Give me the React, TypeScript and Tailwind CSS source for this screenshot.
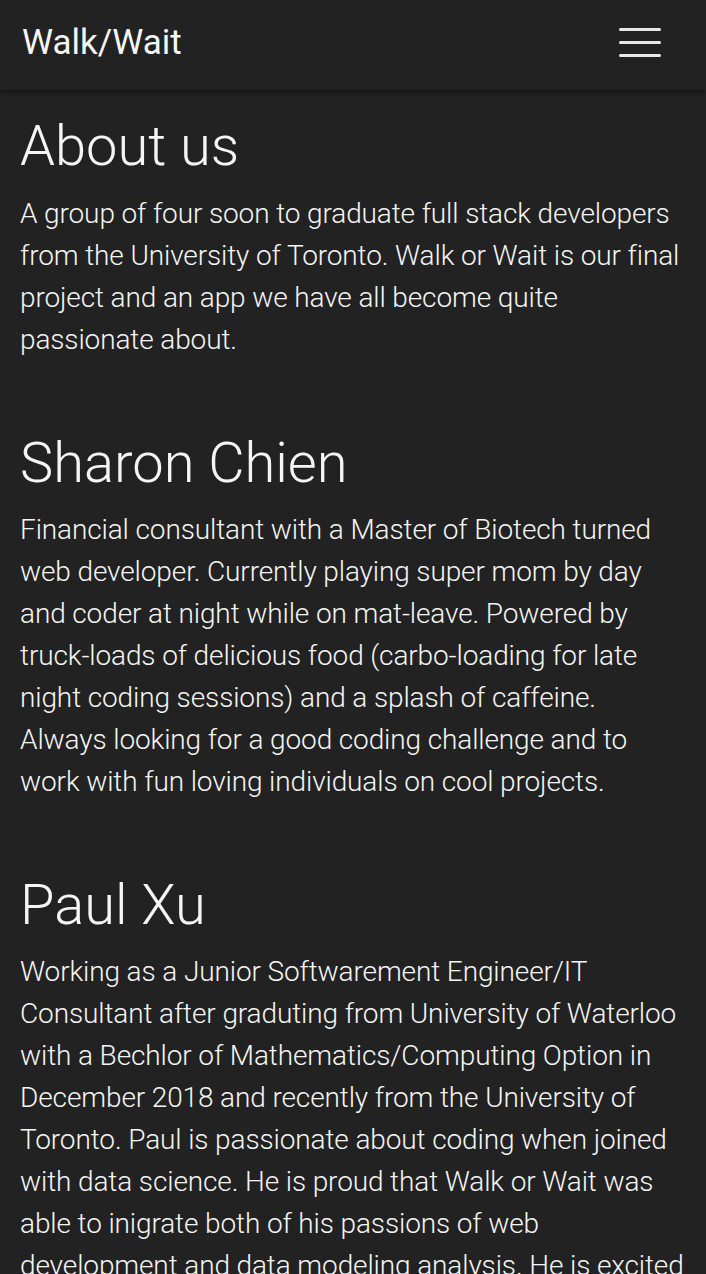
import { Fragment } from "react";

const members = [
  {
    name: "Sharon Chien",
    bio: "Financial consultant with a Master of Biotech turned web developer. Currently playing super mom by day and coder at night while on mat-leave. Powered by truck-loads of delicious food (carbo-loading for late night coding sessions) and a splash of caffeine. Always looking for a good coding challenge and to work with fun loving individuals on cool projects.",
  },
  {
    name: "Paul Xu",
    bio: "Working as a Junior Softwarement Engineer/IT Consultant after graduting from University of Waterloo with a Bechlor of Mathematics/Computing Option in December 2018 and recently from the University of Toronto. Paul is passionate about coding when joined with data science. He is proud that Walk or Wait was able to inigrate both of his passions of web development and data modeling analysis. He is excited to see what the future holds.",
  },
];

function App() {
  return (
    <Fragment>
      <div className="min-h-screen bg-[#222222] text-[#f5f5f5] font-['Roboto',sans-serif]">
        <nav className="relative z-10 h-[90px] pb-[3px] flex items-center justify-between pl-[22px] pr-[45px] bg-[#222222] shadow-[0_2px_6px_rgba(0,0,0,0.45)]">
          <span className="text-[35px] font-normal">Walk/Wait</span>
          <button className="flex flex-col gap-[10px] w-[42px] mb-[2px]">
            <span className="block h-[3px] w-full rounded-full bg-[#e8e8e8]" />
            <span className="block h-[3px] w-full rounded-full bg-[#e8e8e8]" />
            <span className="block h-[3px] w-full rounded-full bg-[#e8e8e8]" />
          </button>
        </nav>
        <main className="px-[20px] pt-[24px] pb-10">
          <section>
            <h1 className="text-[56px] leading-[64px] font-light">About us</h1>
            <p className="mt-[15px] text-[28px] leading-[42px] font-light tracking-[-0.12px]">
              A group of four soon to graduate full stack developers from the
              University of Toronto. Walk or Wait is our final project and an
              app we have all become quite passionate about.
            </p>
          </section>
          {members.map((m) => (
            <section key={m.name} className="mt-[70px]">
              <h2 className="text-[56px] leading-[64px] font-light">{m.name}</h2>
              <p className="mt-[14px] text-[28px] leading-[42px] font-light tracking-[-0.12px]">
                {m.bio}
              </p>
            </section>
          ))}
        </main>
      </div>
    </Fragment>
  );
}

export default App;
